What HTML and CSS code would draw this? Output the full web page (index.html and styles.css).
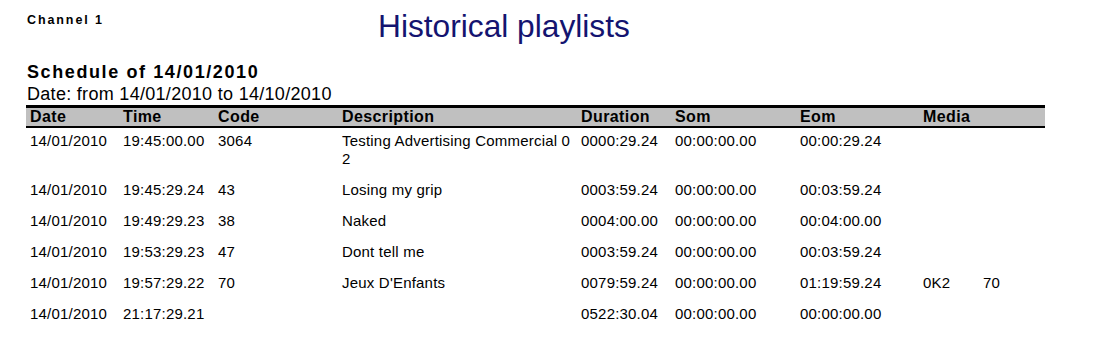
FILE: index.html
```html
<!DOCTYPE html>
<html>
<head>
<meta charset="utf-8">
<link rel="stylesheet" href="styles.css">
</head>
<body>
<div class="page">
  <div class="top">
    <div class="channel">Channel 1</div>
    <h1 class="title">Historical playlists</h1>
  </div>
  <div class="schedule">Schedule of 14/01/2010</div>
  <div class="range">Date: from 14/01/2010 to 14/10/2010</div>
  <div class="report">
    <div class="cols head">
      <div>Date</div><div>Time</div><div>Code</div><div>Description</div><div>Duration</div><div>Som</div><div>Eom</div><div>Media</div>
    </div>
    <div class="cols row">
      <div>14/01/2010</div><div>19:45:00.00</div><div>3064</div><div class="desc">Testing Advertising Commercial 0 2</div><div>0000:29.24</div><div>00:00:00.00</div><div>00:00:29.24</div><div></div>
    </div>
    <div class="cols row">
      <div>14/01/2010</div><div>19:45:29.24</div><div>43</div><div class="desc">Losing my grip</div><div>0003:59.24</div><div>00:00:00.00</div><div>00:03:59.24</div><div></div>
    </div>
    <div class="cols row">
      <div>14/01/2010</div><div>19:49:29.23</div><div>38</div><div class="desc">Naked</div><div>0004:00.00</div><div>00:00:00.00</div><div>00:04:00.00</div><div></div>
    </div>
    <div class="cols row">
      <div>14/01/2010</div><div>19:53:29.23</div><div>47</div><div class="desc">Dont tell me</div><div>0003:59.24</div><div>00:00:00.00</div><div>00:03:59.24</div><div></div>
    </div>
    <div class="cols row">
      <div>14/01/2010</div><div>19:57:29.22</div><div>70</div><div class="desc">Jeux D'Enfants</div><div>0079:59.24</div><div>00:00:00.00</div><div>01:19:59.24</div><div class="media"><span class="media-id">0K2</span><span>70</span></div>
    </div>
    <div class="cols row">
      <div>14/01/2010</div><div>21:17:29.21</div><div></div><div class="desc"></div><div>0522:30.04</div><div>00:00:00.00</div><div>00:00:00.00</div><div></div>
    </div>
  </div>
</div>
</body>
</html>
```

FILE: styles.css
```css
html, body {
  margin: 0;
  padding: 0;
  background: #ffffff;
}

body {
  font-family: "Liberation Sans", Arial, sans-serif;
  color: #000000;
}

.page {
  padding: 7px 0 0 27px;
}

.top {
  display: flex;
  align-items: flex-start;
}

.channel {
  width: 351px;
  margin-top: 6px;
  font-size: 12.5px;
  line-height: 14px;
  font-weight: bold;
  letter-spacing: 1.9px;
}

.title {
  margin: 2px 0 0 0;
  font-size: 31.7px;
  line-height: 34px;
  font-weight: normal;
  color: #141470;
}

.schedule {
  margin-top: 18px;
  font-size: 18px;
  line-height: 22px;
  font-weight: bold;
  letter-spacing: 1.6px;
}

.range {
  font-size: 18px;
  line-height: 22px;
  letter-spacing: 0.3px;
}

.report {
  margin-left: -1px;
  width: 1019px;
}

.cols {
  display: grid;
  grid-template-columns: 93px 95px 124px 239px 94px 125px 123px 1fr;
  padding-left: 4px;
}

.head {
  background: #c0c0c0;
  border-top: 3px solid #000000;
  border-bottom: 2px solid #000000;
  font-size: 16px;
  line-height: 18px;
  font-weight: bold;
  letter-spacing: 0.4px;
}

.row {
  padding-top: 4px;
  padding-bottom: 9px;
  font-size: 15px;
  line-height: 18px;
  letter-spacing: 0.2px;
}

.row:first-of-type {
  padding-bottom: 10px;
}

.desc {
  padding-right: 6px;
}

.media {
  display: flex;
}

.media-id {
  width: 60px;
}
```
